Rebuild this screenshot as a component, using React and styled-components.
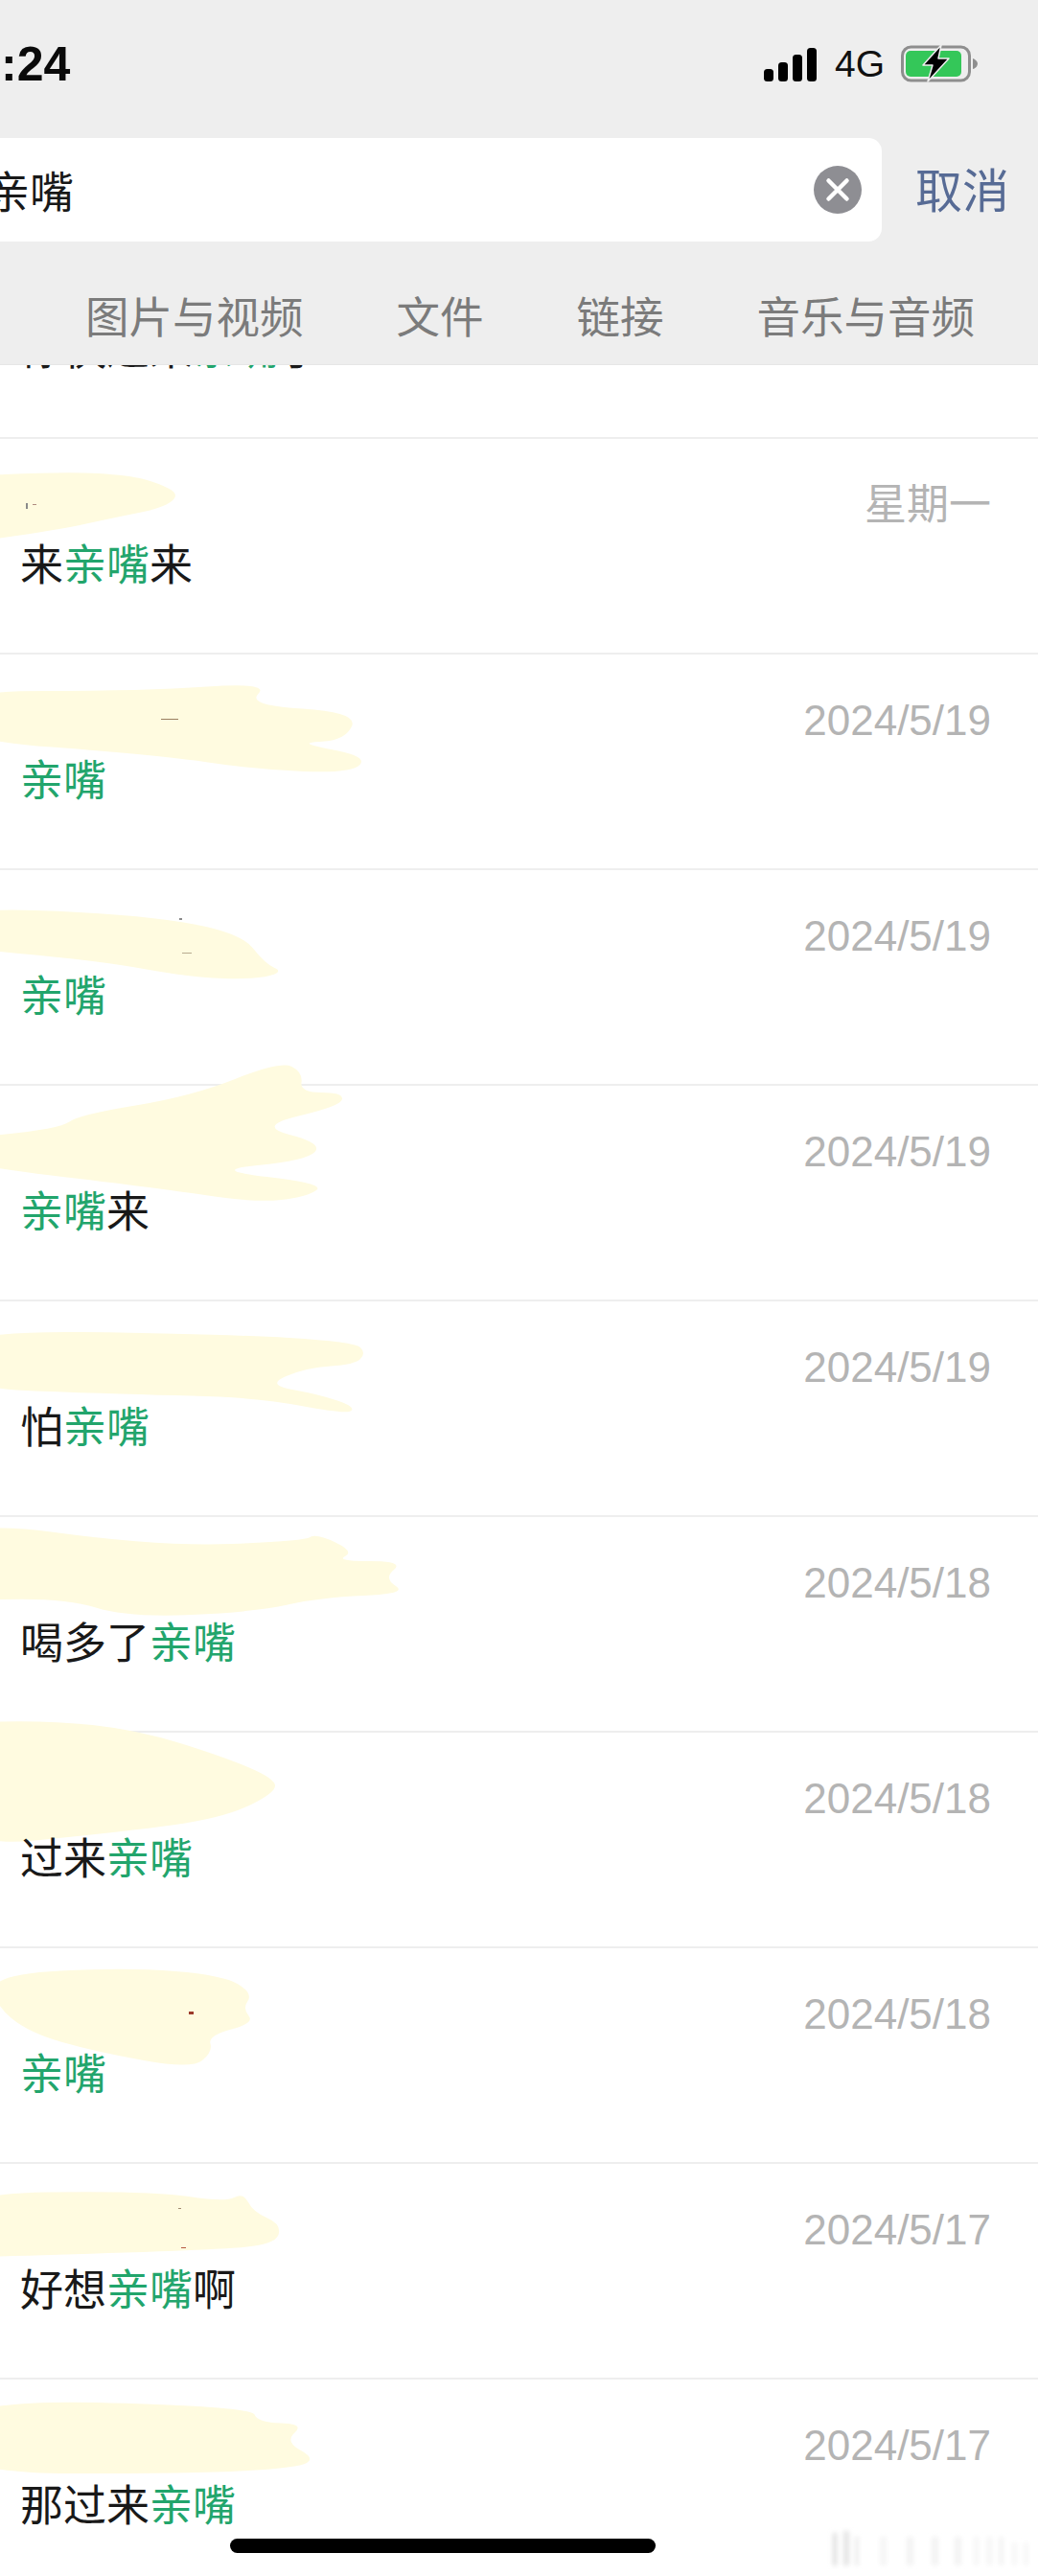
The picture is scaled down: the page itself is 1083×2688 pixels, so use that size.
import React from 'react'
import styled, { createGlobalStyle } from 'styled-components'

const GlobalStyle = createGlobalStyle`
  html, body {
    margin: 0;
    padding: 0;
    background: #fff;
  }
  body {
    font-family: "Noto Sans CJK SC", "Liberation Sans", sans-serif;
  }
`

const Page = styled.div`
  position: relative;
  width: 1083px;
  height: 2688px;
  overflow: hidden;
  background: #fff;
`

const Header = styled.header`
  position: relative;
  z-index: 2;
  height: 381px;
  background: #eeeeee;
  border-bottom: 1px solid #e6e6e6;
  box-sizing: border-box;
`

const StatusBar = styled.div`
  display: flex;
  justify-content: space-between;
  align-items: center;
  box-sizing: border-box;
  height: 144px;
  padding: 0 63px 10px 1px;
`

const Time = styled.span`
  font-family: "Liberation Sans", sans-serif;
  font-size: 50px;
  font-weight: 700;
  color: #0a0a0a;
  line-height: 54px;
`

const StatusIcons = styled.div`
  display: flex;
  align-items: center;
`

const NetworkLabel = styled.span`
  font-family: "Liberation Sans", sans-serif;
  font-size: 39px;
  line-height: 40px;
  color: #111;
  margin: 0 17px 0 19px;
`

const SearchRow = styled.div`
  display: flex;
  align-items: center;
  height: 108px;
`

const SearchBox = styled.div`
  display: flex;
  align-items: center;
  width: 920px;
  height: 108px;
  background: #fff;
  border-radius: 0 14px 14px 0;
`

const SearchText = styled.span`
  margin: -3px 0 0 -15px;
  font-size: 46px;
  line-height: 60px;
  color: #191919;
`

const ClearIcon = styled.svg`
  margin-left: auto;
  margin-right: 21px;
`

const Cancel = styled.span`
  margin: -5px 0 0 35px;
  font-size: 49px;
  line-height: 60px;
  color: #576b95;
`

const Tabs = styled.nav`
  display: flex;
  gap: 97px;
  box-sizing: border-box;
  height: 128px;
  padding: 46px 0 0 89px;
`

const Tab = styled.span`
  font-size: 45.5px;
  line-height: 60px;
  color: #7b7b7b;
`

const List = styled.ul`
  list-style: none;
  margin: -148px 0 0;
  padding: 0;
`

const Row = styled.li`
  position: relative;
  box-sizing: border-box;
  height: 225px;
  padding: 44px 49px 0 21px;
  border-bottom: 2px solid #eeeeee;
`

const Scribble = styled.svg`
  position: absolute;
  left: 0;
  top: 0;
  overflow: visible;
`

const DateText = styled.div`
  position: relative;
  text-align: right;
  font-family: "Liberation Sans", "Noto Sans CJK SC", sans-serif;
  font-size: 44px;
  line-height: 50px;
  color: #b4b4b4;
`

const Message = styled.div`
  position: relative;
  margin-top: 5px;
  font-size: 45px;
  line-height: 60px;
  color: #191919;
`

const Hit = styled.span`
  color: #22a56c;
`

const HomeIndicator = styled.div`
  position: absolute;
  z-index: 3;
  left: 240px;
  top: 2649px;
  width: 444px;
  height: 15px;
  border-radius: 8px;
  background: #000;
`

const Watermark = styled.svg`
  position: absolute;
  z-index: 3;
  left: 860px;
  top: 2636px;
`

const rows = [
  {
    date: '',
    text: ['你快过来', '亲嘴', '了'],
  },
  {
    date: '星期一',
    text: ['来', '亲嘴', '来'],
    blob: '-60,40 70,34 135,38 165,46 188,58 170,72 120,82 60,95 -60,112',
    specks: [[27, 67, 2, 6, '#8a8a8a'], [34, 68, 4, 1, '#b08a80']],
  },
  {
    date: '2024/5/19',
    text: ['', '亲嘴', ''],
    blob: '-60,38 150,38 282,29 257,53 374,60 360,90 307,92 384,106 367,124 267,120 167,105 -60,88',
    specks: [[168, 67, 18, 1, '#9a7f60']],
  },
  {
    date: '2024/5/19',
    text: ['', '亲嘴', ''],
    blob: '-60,39 133,45 250,64 277,98 296,106 267,114 200,112 100,94 -60,80',
    specks: [[187, 50, 3, 2, '#8a8a8a'], [190, 86, 10, 1, '#b8ab90']],
  },
  {
    date: '2024/5/19',
    text: ['', '亲嘴', '来'],
    blob: '83,30 200,11 293,-26 316,-14 313,7 358,7 356,21 267,42 337,60 320,78 217,88 340,102 320,116 267,122 167,107 -60,80 -60,57 62,45',
  },
  {
    date: '2024/5/19',
    text: ['怕', '亲嘴', ''],
    blob: '-60,30 233,34 370,42 382,54 370,66 320,69 277,87 333,97 371,110 362,118 267,100 133,97 -60,90',
  },
  {
    date: '2024/5/18',
    text: ['喝多了', '亲嘴', ''],
    blob: '-60,0 167,31 317,25 330,17 370,36 350,46 422,46 400,64 426,80 333,84 267,99 133,105 67,84 -60,88',
  },
  {
    date: '2024/5/18',
    text: ['过来', '亲嘴', ''],
    blob: '-60,-10 50,-13 143,-3 233,25 287,48 287,63 233,89 133,103 -60,122',
  },
  {
    date: '2024/5/18',
    text: ['', '亲嘴', ''],
    blob: '-6,27 133,20 233,28 264,47 253,63 266,78 217,91 222,108 200,126 100,108 30,88 -6,58',
    specks: [[197, 66, 5, 3, '#9c3a2a']],
  },
  {
    date: '2024/5/17',
    text: ['好想', '亲嘴', '啊'],
    blob: '-60,31 159,28 235,40 254,30 264,50 294,63 287,85 207,90 55,95 -60,98',
    specks: [[186, 46, 3, 1, '#a08a70'], [189, 87, 5, 1, '#b5583f']],
  },
  {
    date: '2024/5/17',
    text: ['那过来', '亲嘴', ''],
    blob: '-60,20 262,28 269,45 318,46 297,65 329,82 311,92 207,98 -60,98',
  },
]

// polygon corners -> rounded outline through the edge midpoints
const smoothPath = points => {
  const pts = points.split(' ').map(p => p.split(',').map(Number))
  const mid = (a, b) => [(a[0] + b[0]) / 2, (a[1] + b[1]) / 2]
  const start = mid(pts[pts.length - 1], pts[0])
  let d = `M${start[0]} ${start[1]}`
  pts.forEach((p, i) => {
    const m = mid(p, pts[(i + 1) % pts.length])
    d += ` Q${p[0]} ${p[1]} ${m[0]} ${m[1]}`
  })
  return d + ' Z'
}

const wmBars = [
  [9, 4, 34, '#dcdcdc'],
  [20, 6, 36, '#e4e4e4'],
  [32, 4, 30, '#ececec'],
  [58, 7, 30, '#f5f5f5'],
  [86, 7, 30, '#f3f3f3'],
  [112, 7, 30, '#f3f3f3'],
  [136, 7, 30, '#f3f3f3'],
  [156, 5, 30, '#f5f5f5'],
  [170, 5, 30, '#f4f4f4'],
  [182, 5, 30, '#f3f3f3'],
  [196, 5, 24, '#f6f6f6'],
  [208, 5, 24, '#f6f6f6'],
]

const SignalIcon = () => (
  <svg width="55" height="35" viewBox="0 0 55 35">
    <rect x="0" y="22" width="10" height="13" rx="3.5" fill="#000" />
    <rect x="15" y="15" width="10" height="20" rx="3.5" fill="#000" />
    <rect x="30" y="7" width="10" height="28" rx="3.5" fill="#000" />
    <rect x="45" y="0" width="10" height="35" rx="3.5" fill="#000" />
  </svg>
)

const BatteryIcon = () => (
  <svg width="80" height="40" viewBox="0 0 80 40">
    <rect x="1.5" y="2" width="70" height="35" rx="9" fill="none" stroke="#8e8e8e" strokeWidth="3" />
    <rect x="5" y="6" width="58" height="27" rx="5" fill="#34c759" />
    <path d="M75 14 C78 15 80 17 80 19.5 C80 22 78 24 75 25 Z" fill="#8e8e8e" />
    <path
      d="M42 0 L23 21 L33 21 L28 38 L50 14 L39 14 Z"
      fill="#000"
      stroke="#eeeeee"
      strokeWidth="1.5"
      strokeLinejoin="round"
    />
  </svg>
)

const Clear = () => (
  <ClearIcon width="50" height="50" viewBox="0 0 50 50">
    <circle cx="25" cy="25" r="25" fill="#8e8e93" />
    <path d="M15.5 15.5 L34.5 34.5 M34.5 15.5 L15.5 34.5" stroke="#fff" strokeWidth="4.5" strokeLinecap="round" />
  </ClearIcon>
)

const App = () => (
  <Page>
    <GlobalStyle />
    <Header>
      <StatusBar>
        <Time>:24</Time>
        <StatusIcons>
          <SignalIcon />
          <NetworkLabel>4G</NetworkLabel>
          <BatteryIcon />
        </StatusIcons>
      </StatusBar>
      <SearchRow>
        <SearchBox>
          <SearchText>亲嘴</SearchText>
          <Clear />
        </SearchBox>
        <Cancel>取消</Cancel>
      </SearchRow>
      <Tabs>
        <Tab>图片与视频</Tab>
        <Tab>文件</Tab>
        <Tab>链接</Tab>
        <Tab>音乐与音频</Tab>
      </Tabs>
    </Header>
    <List>
      {rows.map((row, i) => (
        <Row key={i}>
          {row.blob && (
            <Scribble width="450" height="130">
              <path d={smoothPath(row.blob)} fill="#fffbe0" />
              {row.specks && row.specks.map((s, j) => (
                <rect key={j} x={s[0]} y={s[1]} width={s[2]} height={s[3]} fill={s[4]} />
              ))}
            </Scribble>
          )}
          <DateText>{row.date || '\u00a0'}</DateText>
          <Message>
            {row.text[0]}
            <Hit>{row.text[1]}</Hit>
            {row.text[2]}
          </Message>
        </Row>
      ))}
    </List>
    <HomeIndicator />
    <Watermark width="223" height="52" viewBox="0 0 223 52">
      <filter id="wm-blur">
        <feGaussianBlur stdDeviation="2.5" />
      </filter>
      <g filter="url(#wm-blur)">
        {wmBars.map((b, i) => (
          <rect key={i} x={b[0]} y={41 - b[2]} width={b[1]} height={b[2]} fill={b[3]} />
        ))}
      </g>
    </Watermark>
  </Page>
)

export default App
